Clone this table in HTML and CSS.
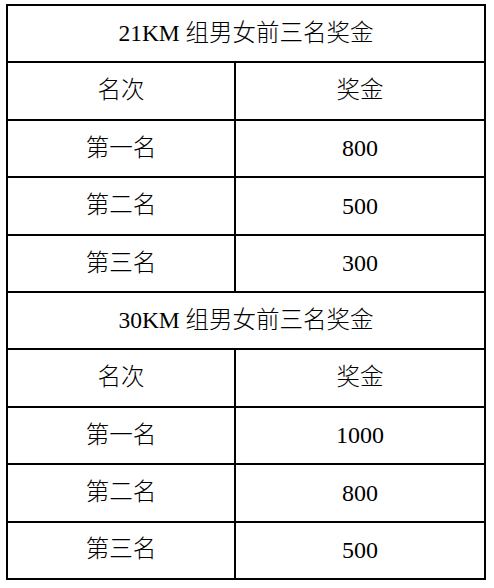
FILE: index.html
```html
<!DOCTYPE html>
<html lang="zh">
<head>
<meta charset="utf-8">
<link rel="stylesheet" href="styles.css">
</head>
<body>
<table class="prize">
  <colgroup><col class="c1"><col class="c2"></colgroup>
  <tr><td colspan="2" class="title">21KM 组男女前三名奖金</td></tr>
  <tr><td>名次</td><td>奖金</td></tr>
  <tr><td>第一名</td><td class="num">800</td></tr>
  <tr><td>第二名</td><td class="num">500</td></tr>
  <tr><td>第三名</td><td class="num">300</td></tr>
  <tr><td colspan="2" class="title">30KM 组男女前三名奖金</td></tr>
  <tr><td>名次</td><td>奖金</td></tr>
  <tr><td>第一名</td><td class="num">1000</td></tr>
  <tr><td>第二名</td><td class="num">800</td></tr>
  <tr><td>第三名</td><td class="num">500</td></tr>
</table>
</body>
</html>
```
FILE: styles.css
```css
html, body {
  margin: 0;
  padding: 0;
  background: #fff;
}
body {
  font-family: "Liberation Serif", "Noto Sans CJK SC", serif;
  color: #000;
}
.prize {
  border-collapse: collapse;
  margin: 4px 0 0 6px;
  width: 480px;
  table-layout: fixed;
}
.c1 { width: 228px; }
.c2 { width: 250px; }
.prize td {
  border: 2px solid #000;
  height: 55.4px;
  padding: 0;
  text-align: center;
  vertical-align: middle;
  font-size: 23.5px;
  font-weight: 300;
  line-height: 1;
}
.prize td.num {
  font-family: "Liberation Serif", serif;
  font-weight: 400;
  font-size: 24px;
}
```
